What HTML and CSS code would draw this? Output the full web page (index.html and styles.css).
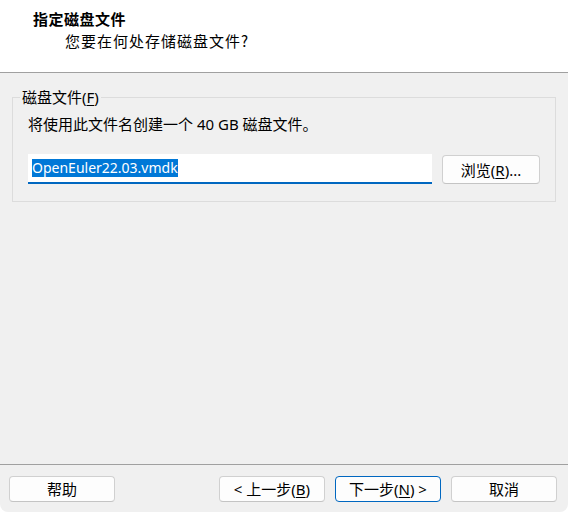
FILE: index.html
```html
<!DOCTYPE html>
<html lang="zh-CN">
<head>
<meta charset="utf-8">
<title>指定磁盘文件</title>
<link rel="stylesheet" href="styles.css">
</head>
<body>
<div class="window">
  <header class="header">
    <div class="title">指定磁盘文件</div>
    <div class="subtitle">您要在何处存储磁盘文件?</div>
  </header>
  <main class="content">
    <fieldset class="group">
      <legend class="legend">磁盘文件(<u>F</u>)</legend>
      <p class="desc">将使用此文件名创建一个 40 GB 磁盘文件。</p>
      <div class="file-row">
        <div class="input"><span class="sel">OpenEuler22.03.vmdk</span></div>
        <button class="btn browse">浏览(<u>R</u>)...</button>
      </div>
    </fieldset>
  </main>
  <footer class="footer">
    <button class="btn nav">帮助</button>
    <div class="spacer"></div>
    <button class="btn nav">&lt; 上一步(<u>B</u>)</button>
    <button class="btn nav default">下一步(<u>N</u>) &gt;</button>
    <button class="btn nav">取消</button>
  </footer>
</div>
</body>
</html>
```
FILE: styles.css
```css
* { box-sizing: border-box; }
html, body { margin: 0; padding: 0; background: #ffffff; }
body {
  font-family: "Noto Sans", "Noto Sans CJK SC", sans-serif;
  font-size: 15px;
  color: #000;
}
.window {
  width: 568px;
  height: 512px;
  display: flex;
  flex-direction: column;
  background: #f0f0f0;
  border-radius: 0 0 8px 8px;
  overflow: hidden;
}
.header {
  height: 73px;
  background: #ffffff;
  border-bottom: 1px solid #a0a0a0;
  padding-top: 9px;
  flex: none;
}
.title {
  font-family: "Noto Sans CJK SC", sans-serif;
  font-weight: bold;
  font-size: 15px;
  line-height: 20px;
  letter-spacing: 0.5px;
  margin-left: 33px;
}
.subtitle {
  font-family: "Noto Sans CJK SC", sans-serif;
  font-size: 15px;
  line-height: 20px;
  letter-spacing: 1px;
  margin-left: 65px;
  margin-top: 2px;
}
.content {
  flex: 1;
  padding: 14px 12px 0 12px;
  border-bottom: 1px solid #a0a0a0;
}
.group {
  margin: 0;
  border: 1px solid #dcdcdc;
  padding: 7px 15px 17px 15px;
  min-width: 0;
}
.legend {
  margin-left: -8px;
  padding: 0 2px;
  line-height: 20px;
}
.desc {
  margin: 0;
  line-height: 20px;
}
.file-row {
  display: flex;
  gap: 10px;
  margin-top: 20px;
}
.input {
  flex: 1;
  height: 30px;
  background: #ffffff;
  border-bottom: 2px solid #0067c0;
  padding: 3px 0 0 4px;
}
.sel {
  display: inline-block;
  background: #0078d7;
  color: #ffffff;
  font-size: 14px;
  line-height: 18px;
  height: 18px;
}
u { text-decoration: underline; text-underline-offset: 2px; }
.btn {
  font: inherit;
  color: #000;
  background: #fdfdfd;
  border: 1px solid #d0d0d0;
  border-bottom-color: #c4c4c4;
  border-radius: 4px;
  padding: 0;
  line-height: 20px;
}
.browse {
  width: 98px;
  height: 29px;
  margin-top: 1px;
}
.footer {
  height: 47px;
  flex: none;
  display: flex;
  align-items: flex-start;
  gap: 10px;
  padding: 11px 11px 0 9px;
}
.spacer { flex: 1; }
.nav {
  width: 106px;
  height: 26px;
}
.default {
  border-color: #0067c0;
}
```
